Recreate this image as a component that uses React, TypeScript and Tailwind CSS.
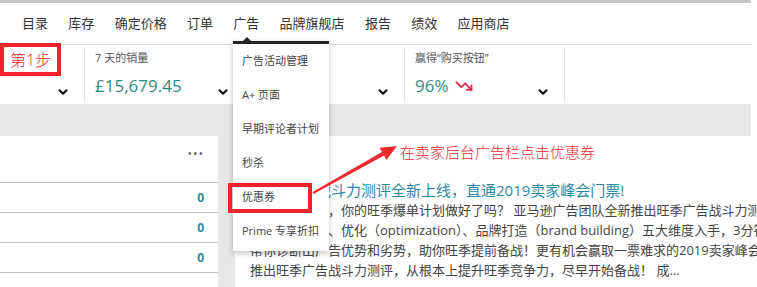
import { ChevronDown, TrendingDown } from 'lucide-react';

const NAV = ['目录', '库存', '确定价格', '订单', '广告', '品牌旗舰店', '报告', '绩效', '应用商店'];
const MENU = ['广告活动管理', 'A+ 页面', '早期评论者计划', '秒杀', '优惠券', 'Prime 专享折扣'];

const BODY = [
  '旺季即将来临，你的旺季爆单计划做好了吗？ 亚马逊广告团队全新推出旺季广告战斗力测评，帮你全面了解广告表现',
  '从投放与曝光、优化（optimization）、品牌打造（brand building）五大维度入手，3分钟了解',
  '帮你诊断出广告优势和劣势，助你旺季提前备战！更有机会赢取一票难求的2019卖家峰会门票',
  '推出旺季广告战斗力测评，从根本上提升旺季竞争力，尽早开始备战！ 成...',
];

function Metric({ label, value, trend = false, width = 'w-[160px]' }: { label?: string; value?: string; trend?: boolean; width?: string }) {
  return (
    <div className={`${width} flex justify-between border-r border-[#e3e3e3] pl-[10px] pr-[14px]`}>
      <div className="flex flex-col">
        {label && <div className="text-[11px] leading-[14px] text-[#555] mt-[3px]">{label}</div>}
        {value && (
          <div className="flex items-center gap-[6px] mt-[10px]">
            <span className="text-[17px] leading-[22px] text-[#2e8b84]">{value}</span>
            {trend && <TrendingDown size={18} strokeWidth={2.5} className="text-[#d8314c]" />}
          </div>
        )}
      </div>
      <ChevronDown size={14} strokeWidth={3.5} className="self-end mb-[2px] text-[#111]" />
    </div>
  );
}

export default function App() {
  return (
    <div className="relative w-[757px] h-[287px] overflow-hidden bg-white font-['Open_Sans','Noto_Sans_CJK_SC',sans-serif]">
      <div className="w-[751px] h-[3px] bg-[#c6c6c6]" />
      <nav className="w-[751px] h-[42px] flex items-center gap-[20.3px] pl-[22px] border-b border-[#dcdcdc]">
        {NAV.map((n) => (
          <span key={n} className="text-[13px] text-[#333]">{n}</span>
        ))}
      </nav>

      <div className="w-[751px] h-[59px] flex py-[3px]">
        <Metric width="w-[85px]" />
        <Metric label="7 天的销量" value="£15,679.45" />
        <Metric />
        <Metric label="赢得“购买按钮”" value="96%" trend />
      </div>

      <div className="w-[751px] h-[32px] bg-[#e7e7e7]" />

      <div className="flex h-[151px]">
        <div className="w-[218px] bg-white">
          <div className="h-[47px] flex items-start justify-end pr-[14px] pt-[9px] border-b border-[#c4c4c4] text-[#666] text-[12px] tracking-[1px]">
            •••
          </div>
          {[0, 1, 2].map((i) => (
            <div key={i} className="h-[30px] flex items-center justify-end pr-[14px] border-b border-[#c4c4c4] text-[12px] font-bold text-[#2b8a9e]">
              0
            </div>
          ))}
        </div>
        <div className="w-[17px] bg-[#e7e7e7]" />
        <div className="flex-1 bg-white pl-[15px] pt-[44px] whitespace-nowrap overflow-hidden">
          <div className="ml-[-9px] text-[15px] leading-[20px] text-[#2b8aa3]">亚马逊广告战斗力测评全新上线，直通2019卖家峰会门票!</div>
          {BODY.map((l) => (
            <div key={l} className="text-[13px] leading-[20px] text-[#444]">{l}</div>
          ))}
        </div>
      </div>

      {/* dropdown menu */}
      <div className="absolute left-[233px] top-[41px] w-[96px] h-[210px] bg-white border-t-[3px] border-[#232323] shadow-[0_2px_6px_rgba(0,0,0,0.25)]">
        <div className="absolute left-[9px] -top-[7px] w-0 h-0 border-x-[5px] border-x-transparent border-b-[5px] border-b-[#232323]" />
        {MENU.map((m) => (
          <div key={m} className="h-[34px] flex items-center pl-[9px] text-[11px] text-[#444]">{m}</div>
        ))}
      </div>

      {/* annotations */}
      <div className="absolute left-0 top-[43px] w-[61px] h-[33px] border-[4px] border-[#f2242b] bg-white flex items-center justify-center text-[16px] text-[#ee2a2e] font-light">
        第1步
      </div>
      <div className="absolute left-[228px] top-[183px] w-[84px] h-[30px] border-[4px] border-[#f2242b]" />
      <svg className="absolute left-[300px] top-[135px]" width="105" height="70" viewBox="0 0 105 70">
        <polygon
          points="12.5,57.1 82,17.1 79.6,12.7 97,11 86.4,24.9 84,20.5 13.5,58.9"
          fill="#ee2a2e"
        />
      </svg>
      <div className="absolute left-[400px] top-[142px] text-[15px] leading-[20px] text-[#ee2a2e] font-light">
        在卖家后台广告栏点击优惠券
      </div>
    </div>
  );
}
